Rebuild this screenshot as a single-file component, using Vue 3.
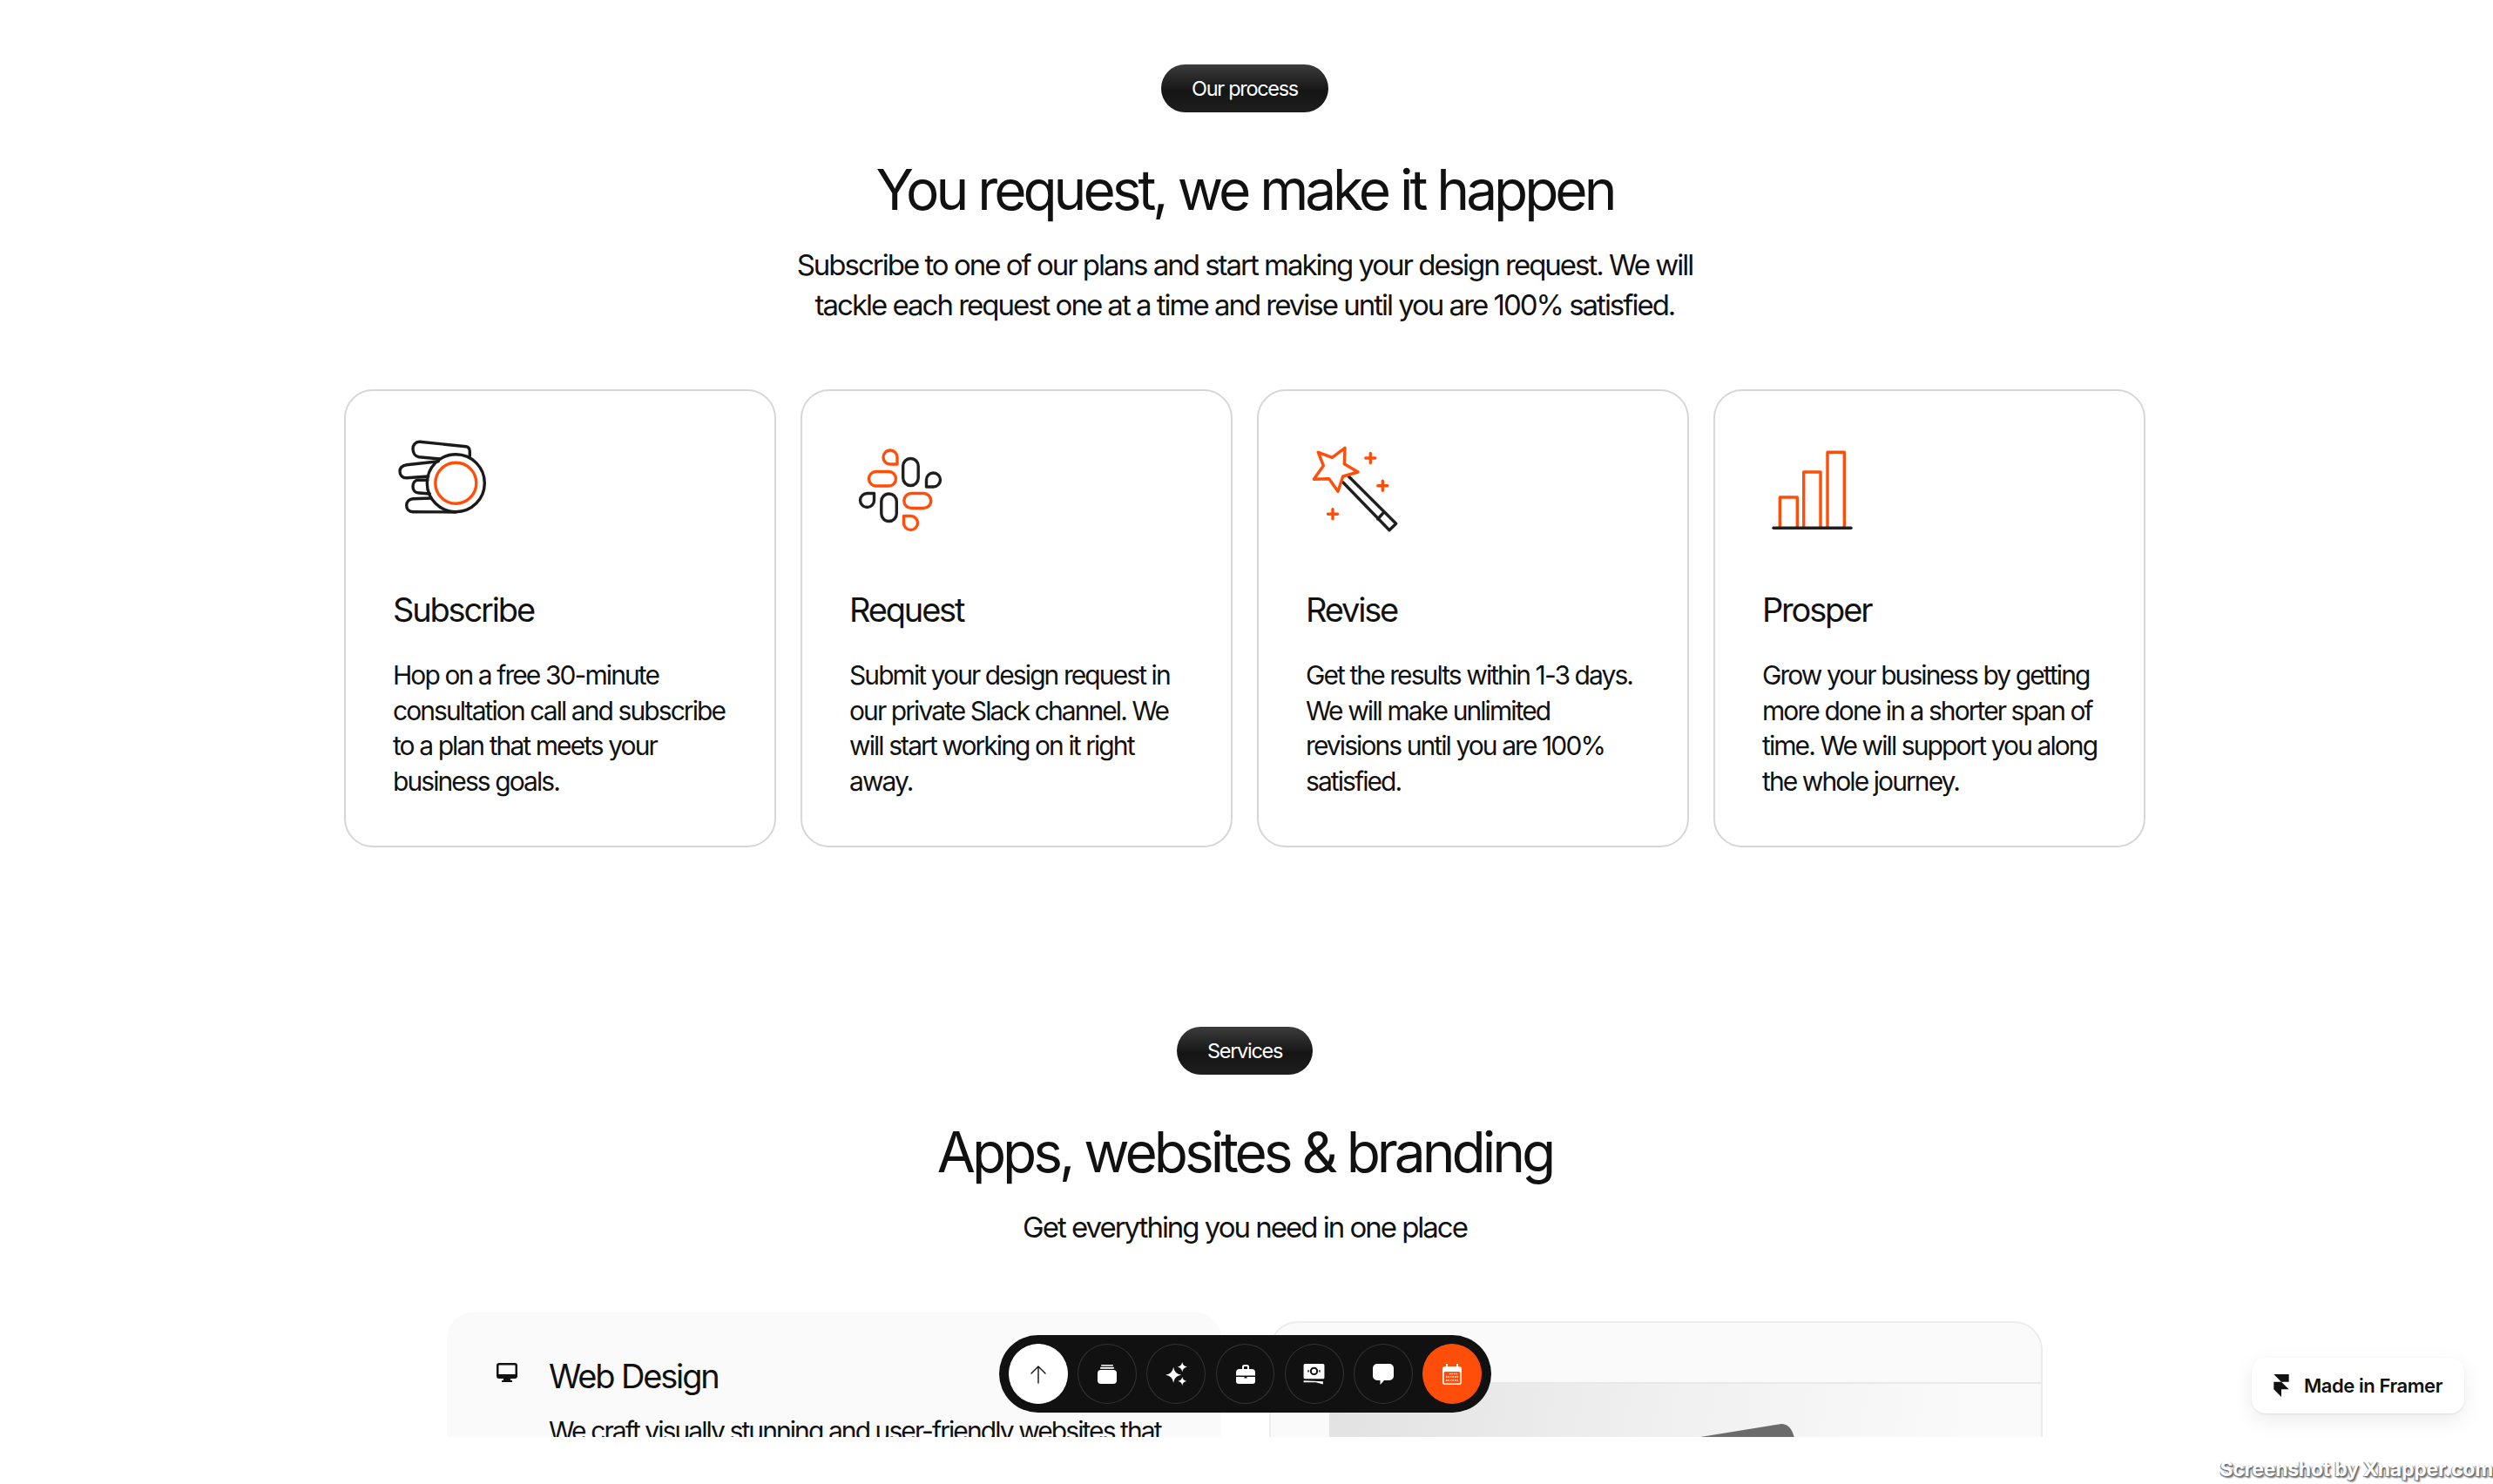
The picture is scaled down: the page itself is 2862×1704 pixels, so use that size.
<script setup>
const steps = [
  { id: 'subscribe', title: 'Subscribe', lines: ['Hop on a free 30-minute', 'consultation call and subscribe', 'to a plan that meets your', 'business goals.'] },
  { id: 'request', title: 'Request', lines: ['Submit your design request in', 'our private Slack channel. We', 'will start working on it right', 'away.'] },
  { id: 'revise', title: 'Revise', lines: ['Get the results within 1-3 days.', 'We will make unlimited', 'revisions until you are 100%', 'satisfied.'] },
  { id: 'prosper', title: 'Prosper', lines: ['Grow your business by getting', 'more done in a shorter span of', 'time. We will support you along', 'the whole journey.'] }
]
</script>

<template>
  <div class="screen">
    <div class="viewport">
      <section class="process">
        <span class="pill">Our process</span>
        <h2 class="heading">You request, we make it happen</h2>
        <p class="lead">Subscribe to one of our plans and start making your design request. We will<br>tackle each request one at a time and revise until you are 100% satisfied.</p>
        <div class="cards">
          <article v-for="s in steps" :key="s.id" class="card">
            <svg class="step-icon" viewBox="0 0 120 120" fill="none" stroke-width="3.4" stroke-linecap="round" stroke-linejoin="round">
              <template v-if="s.id === 'subscribe'">
                <g stroke="#1a1a1a">
                  <path d="M88.3 31.7V26Q88 21.5 84 20.7L31 15.3C26 15 23 19 23 23.3C23 28 25.5 32 30 32.7L54 35" />
                  <path d="M52.3 37.7L16 41.7C11 42.5 8 45.5 8 49.3C8 53.5 11 57 16 56.7L40.7 55" />
                  <path d="M39.7 59.3H29C25.5 59.3 23 62.5 23 66.7C23 71 25.5 74 30 74L42.3 75" />
                  <path d="M44 80L23 80.7C18.5 81 15.7 84.5 15.7 88.3C15.7 92.5 18.5 95.7 23 95.7L72.3 96" />
                  <circle cx="72.3" cy="62.7" r="33" />
                </g>
                <circle cx="72.3" cy="62.7" r="23.5" stroke="#ff4d0a" />
              </template>
              <template v-else-if="s.id === 'request'">
                <g stroke="#ff4d0a">
                  <rect x="22.5" y="49.5" width="31" height="16.5" rx="8.2" />
                  <rect x="62.8" y="74.5" width="31" height="17" rx="8.5" />
                  <path d="M55 41h-8a8 8 0 1 1 8-8z" />
                  <path d="M62.5 100.5h8a8 8 0 1 1-8 8z" />
                </g>
                <g stroke="#1f1f1f">
                  <rect x="61.7" y="34.5" width="17.5" height="31" rx="8.7" />
                  <rect x="36.8" y="75" width="17.5" height="31.5" rx="8.7" />
                  <path d="M88.5 67V59a8 8 0 1 1 8 8z" />
                  <path d="M28.5 74.5V82.5a8 8 0 1 1-8-8z" />
                </g>
              </template>
              <template v-else-if="s.id === 'revise'">
                <path stroke="#1f1f1f" d="M49.3 55L103.7 109.3L96 116.7L42.7 61.7M89.3 96.7L82.7 104" />
                <path stroke="#ff4d0a" d="M14.3 27.3L30.3 33.3L45 22.3L44.3 40.7L60 50L42.7 55L37 72.3L26.7 57.7L9.3 58.3L20.3 42.7Z" />
                <path stroke="#ff4d0a" d="M74.3 28.5V39.5M68.8 34H79.8M88.3 60.2V71.2M82.8 65.7H93.8M31 92.8V103.8M25.5 98.3H36.5" />
              </template>
              <template v-else>
                <g stroke="#ff4d0a" stroke-linecap="butt">
                  <path d="M20.3 114V79H40.3V114" />
                  <path d="M47.7 114V50H67V114" />
                  <path d="M75 114V27.3H94.3V114" />
                </g>
                <path stroke="#1f1f1f" d="M13 114.3H102" />
              </template>
            </svg>
            <h3 class="card-title">{{ s.title }}</h3>
            <p class="card-text"><template v-for="(l, i) in s.lines" :key="i">{{ l }}<br></template></p>
          </article>
        </div>
      </section>

      <section class="services">
        <span class="pill">Services</span>
        <h2 class="heading">Apps, websites &amp; branding</h2>
        <p class="lead">Get everything you need in one place</p>
        <div class="service-row">
          <article class="service">
            <svg class="service-icon" viewBox="0 0 24 22" fill="#111">
              <path d="M3 0h18a3 3 0 0 1 3 3v12a3 3 0 0 1-3 3h-5v2h2v2H6v-2h2v-2H3a3 3 0 0 1-3-3V3a3 3 0 0 1 3-3zm0 2.5a.5.5 0 0 0-.5.5v10h19V3a.5.5 0 0 0-.5-.5z" />
            </svg>
            <div class="service-body">
              <h3 class="service-title">Web Design</h3>
              <p class="service-text">We craft visually stunning and user-friendly websites that</p>
            </div>
          </article>
          <div class="preview">
            <div class="preview-bar"></div>
            <div class="preview-art">
              <svg class="preview-shape" viewBox="0 0 114 20"><path d="M0 16L99 0Q110 0 114 16V20H0Z" fill="#6b6b6b" /></svg>
            </div>
          </div>
        </div>
      </section>

      <nav class="dock">
        <a class="dock-btn up">
          <svg viewBox="0 0 24 24" fill="none" stroke="#111" stroke-width="1.4" stroke-linecap="round" stroke-linejoin="round"><path d="M12 22V3M4 11l8-8 8 8" /></svg>
        </a>
        <a class="dock-btn">
          <svg viewBox="0 0 24 24" fill="#fff"><rect x="1" y="7" width="22" height="16" rx="4" /><rect x="4" y="3.8" width="16" height="2" rx="1" /><rect x="5" y="1" width="14" height="1.6" rx=".8" /></svg>
        </a>
        <a class="dock-btn">
          <svg class="big" viewBox="0 0 24 24" fill="#fff"><path d="M9 5q1 7 8 8-7 1-8 8-1-7-8-8 7-1 8-8zM18 0q.6 4 5 5-4.400.6-5 5-.6-4.400-5-5 4.400-1 5-5zM18 15q.5 3.500 4.500 4.500-4 .5-4.500 4.500-.5-4-4.500-4.500 4-1 4.500-4.500z" /></svg>
        </a>
        <a class="dock-btn">
          <svg viewBox="0 0 24 24" fill="#fff"><path d="M8 6V3.500A2.500 2.500 0 0 1 10.500 1h3A2.500 2.500 0 0 1 16 3.500V6h3a4 4 0 0 1 4 4v3.500H1V10a4 4 0 0 1 4-4zm2 0h4V3.500a.5.5 0 0 0-.5-.5h-3a.5.5 0 0 0-.5.5z" /><path d="M1 15h9.500v1.500h3V15H23v5a3 3 0 0 1-3 3H4a3 3 0 0 1-3-3z" /></svg>
        </a>
        <a class="dock-btn">
          <svg class="big" viewBox="0 0 26 24" fill="#fff"><path fill-rule="evenodd" d="M3 1h20a1.500 1.500 0 0 1 1.500 1.500V16a1.500 1.500 0 0 1-1.500 1.500H3A1.500 1.500 0 0 1 1.500 16V2.500A1.500 1.500 0 0 1 3 1zm10 3.500a4.500 4.500 0 1 0 0 9 4.500 4.500 0 0 0 0-9zm0 2a2.500 2.500 0 1 1 0 5 2.500 2.500 0 0 1 0-5zM6 8v2h1.500V8zm12.500 0v2H20V8z" /><path d="M1.500 19.500l21.500 1v3l-8-2-13.500-.2z" /></svg>
        </a>
        <a class="dock-btn">
          <svg viewBox="0 0 24 24" fill="#fff"><path d="M5 0h14a5 5 0 0 1 5 5v9a5 5 0 0 1-5 5h-6l-4.500 5V19H5a5 5 0 0 1-5-5V5a5 5 0 0 1 5-5z" /></svg>
        </a>
        <a class="dock-btn cal">
          <svg viewBox="0 0 24 24"><path fill="#fff" d="M5 0h2v3h10V0h2v3h1a3 3 0 0 1 3 3v15a3 3 0 0 1-3 3H4a3 3 0 0 1-3-3V6a3 3 0 0 1 3-3h1z" /><rect x="2.600" y="9" width="18.800" height="13.400" rx="1.500" fill="#ff4d0a" /><path d="M9 11.500h9M5 15h14M5 19h14" stroke="#fff" stroke-width="1.500" stroke-dasharray="1.400 1.100" fill="none" /></svg>
        </a>
      </nav>

      <a class="badge">
        <svg viewBox="0 0 24 24" fill="#111"><path d="M4 0h16v8h-8zM4 8h8l8 8H4zM4 16h8v8z" /></svg>
        <span>Made in Framer</span>
      </a>
    </div>
    <div class="strip"><span class="mark">Screenshot by Xnapper.com</span></div>
  </div>
</template>

<style scoped>
.screen {
  width: 2862px;
  height: 1704px;
  background: #fff;
  color: #111;
  font-family: Inter, "Liberation Sans", sans-serif;
  overflow: hidden;
}
.viewport {
  position: relative;
  height: 1650px;
  overflow: hidden;
}
.process, .services {
  display: flex;
  flex-direction: column;
  align-items: center;
  width: 2858px;
}
.process { padding-top: 74px; }
.services { padding-top: 206px; }
.pill {
  display: flex;
  align-items: center;
  height: 55px;
  padding: 0 35px;
  border-radius: 28px;
  background: linear-gradient(180deg, #3c3c3c 0%, #151515 55%, #1e1e1e 100%);
  color: #fff;
  font-size: 23.500px;
  letter-spacing: -0.055em;
}
.heading {
  margin: 54px 0 0;
  font-size: 64px;
  line-height: 70px;
  font-weight: 400;
  letter-spacing: -0.063em;
  white-space: nowrap;
}
.lead {
  margin: 29px 0 0;
  font-size: 33px;
  line-height: 45.6px;
  letter-spacing: -0.061em;
  text-align: center;
  white-space: nowrap;
}
.cards {
  display: grid;
  grid-template-columns: repeat(4, 496px);
  gap: 28px;
  margin-top: 74px;
}
.card {
  box-sizing: border-box;
  height: 526px;
  padding: 43px 30px 0 54px;
  border: 2px solid #d6d6d6;
  border-radius: 33px;
}
.step-icon {
  display: block;
  width: 120px;
  height: 120px;
}
.card-title {
  margin: 65px 0 0;
  font-size: 38px;
  line-height: 46px;
  font-weight: 400;
  letter-spacing: -0.057em;
}
.card-text {
  margin: 32px 0 0;
  font-size: 30px;
  line-height: 40.5px;
  letter-spacing: -0.064em;
  white-space: nowrap;
}
.service-row {
  display: grid;
  grid-template-columns: 889px 888px;
  gap: 55px;
  margin-top: 74px;
  align-items: start;
}
.service {
  display: flex;
  gap: 36px;
  box-sizing: border-box;
  height: 400px;
  padding: 50px 0 0 57px;
  border-radius: 30px;
  background: #fafafa;
}
.service-icon {
  width: 24px;
  height: 22px;
  flex: none;
  margin-top: 8px;
}
.service-title {
  margin: 0;
  font-size: 38px;
  line-height: 46px;
  font-weight: 400;
  letter-spacing: -0.057em;
}
.service-text {
  margin: 20px 0 0;
  font-size: 30px;
  line-height: 40.5px;
  letter-spacing: -0.064em;
  white-space: nowrap;
}
.preview {
  box-sizing: border-box;
  height: 400px;
  margin-top: 10px;
  border: 2px solid #ececec;
  border-radius: 33px 33px 0 0;
  background: #fafafa;
}
.preview-bar {
  height: 68px;
  border-bottom: 2px solid #e9e9e9;
}
.preview-art {
  position: relative;
  height: 320px;
  margin-left: 67px;
  background: linear-gradient(100deg, #e2e2e2 0%, #f0f0f0 45%, #fafafa 85%);
}
.preview-shape {
  position: absolute;
  left: 420px;
  top: 46px;
  width: 114px;
  height: 20px;
}
.dock {
  position: absolute;
  left: 1147px;
  top: 1533px;
  display: flex;
  gap: 11.500px;
  box-sizing: border-box;
  width: 565px;
  height: 89px;
  padding: 10px 11px;
  border-radius: 45px;
  background: #111;
}
.dock-btn {
  display: flex;
  align-items: center;
  justify-content: center;
  box-sizing: border-box;
  width: 68.500px;
  height: 69px;
  border: 1px solid #333;
  border-radius: 50%;
}
.dock-btn svg {
  width: 24px;
  height: 24px;
}
.dock-btn svg.big {
  width: 27px;
  height: 27px;
}
.up { background: #fff; border-color: #fff; }
.cal { background: #ff4d0a; border-color: #ff4d0a; }
.badge {
  position: absolute;
  left: 2585px;
  top: 1559px;
  display: flex;
  align-items: center;
  gap: 13px;
  box-sizing: border-box;
  width: 244px;
  height: 64px;
  padding-left: 21px;
  border-radius: 16px;
  background: #fff;
  box-shadow: 0 1px 2px rgba(0,0,0,.08), 0 8px 24px rgba(0,0,0,.08);
  font-size: 22px;
  font-weight: 600;
  letter-spacing: -0.02em;
  white-space: nowrap;
}
.badge svg {
  width: 26px;
  height: 30px;
  flex: none;
}
.strip {
  display: flex;
  justify-content: flex-end;
  align-items: center;
  height: 54px;
  padding-top: 20px;
  box-sizing: border-box;
}
.mark {
  color: #fff;
  font-size: 23px;
  font-weight: 700;
  letter-spacing: -0.01em;
  text-shadow: 1px 1px 1px #666, -1px 1px 1px #888, 2px 2px 2px #777;
  white-space: nowrap;
}
</style>
